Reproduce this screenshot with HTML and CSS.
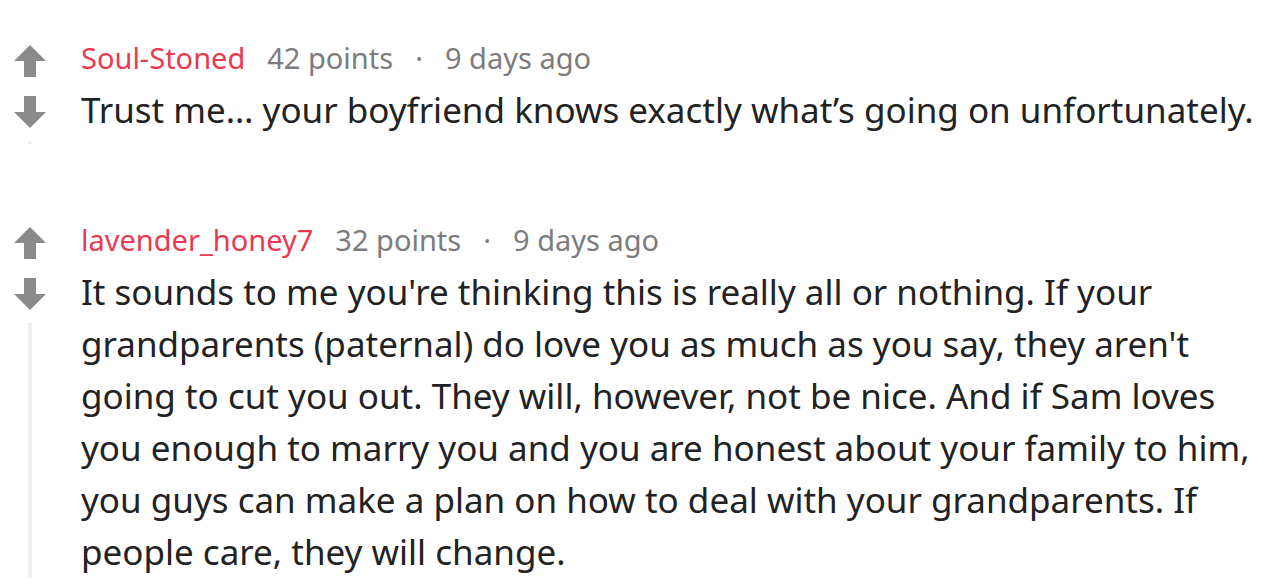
FILE: index.html
```html
<!DOCTYPE html>
<html>
	<head>
		<meta charset="utf-8">
		<title>Comments</title>
		<link rel="stylesheet" href="styles.css">
	</head>
	<body>
		<div class="comment first">
			<div class="votes">
				<svg class="arrow" viewBox="0 0 32 32"><polygon points="16,0 32,16 22,16 22,32 10,32 10,16 0,16"/></svg>
				<svg class="arrow down" viewBox="0 0 32 32"><polygon points="16,0 32,16 22,16 22,32 10,32 10,16 0,16"/></svg>
				<div class="thread"></div>
			</div>
			<div class="body">
				<div class="meta">
					<span class="author">Soul-Stoned</span>
					<span>42 points</span>
					<span class="dot">·</span>
					<span>9 days ago</span>
				</div>
				<p class="text">Trust me… your boyfriend knows exactly what’s going on unfortunately.</p>
			</div>
		</div>
		<div class="comment second">
			<div class="votes">
				<svg class="arrow" viewBox="0 0 32 32"><polygon points="16,0 32,16 22,16 22,32 10,32 10,16 0,16"/></svg>
				<svg class="arrow down" viewBox="0 0 32 32"><polygon points="16,0 32,16 22,16 22,32 10,32 10,16 0,16"/></svg>
				<div class="thread"></div>
			</div>
			<div class="body">
				<div class="meta">
					<span class="author">lavender_honey7</span>
					<span>32 points</span>
					<span class="dot">·</span>
					<span>9 days ago</span>
				</div>
				<p class="text">It sounds to me you're thinking this is really all or nothing. If your grandparents (paternal) do love you as much as you say, they aren't going to cut you out. They will, however, not be nice. And if Sam loves you enough to marry you and you are honest about your family to him, you guys can make a plan on how to deal with your grandparents. If people care, they will change.</p>
			</div>
		</div>
	</body>
</html>
```
FILE: styles.css
```css
body {
    margin: 0;
    background: #fff;
    font-family: "Noto Sans", "Open Sans", sans-serif;
    color: #1c1c1c;
    overflow: hidden;
}
.comment {
    display: flex;
}
.first {
    padding-top: 45px;
}
.second {
    padding-top: 83px;
}
.votes {
    width: 81px;
    flex: none;
    display: flex;
    flex-direction: column;
    align-items: flex-start;
    padding-left: 14px;
    box-sizing: border-box;
}
.arrow {
    width: 32px;
    height: 32px;
    fill: #888a8c;
}
.arrow.down {
    margin-top: 19px;
    transform: rotate(180deg);
}
.thread {
    width: 4px;
    margin-left: 14px;
    margin-top: 13px;
    background: #edeff1;
    flex: 1;
}
.first .thread {
    flex: none;
    height: 3px;
}
.body {
    width: 1180px;
}
.meta {
    display: flex;
    gap: 22px;
    font-size: 29px;
    line-height: 26px;
    color: #7c7c7c;
}
.author {
    color: #ea3a53;
}
.text {
    margin: 0;
    padding-top: 13px;
    font-size: 35px;
    line-height: 52px;
    color: #222;
}
```
